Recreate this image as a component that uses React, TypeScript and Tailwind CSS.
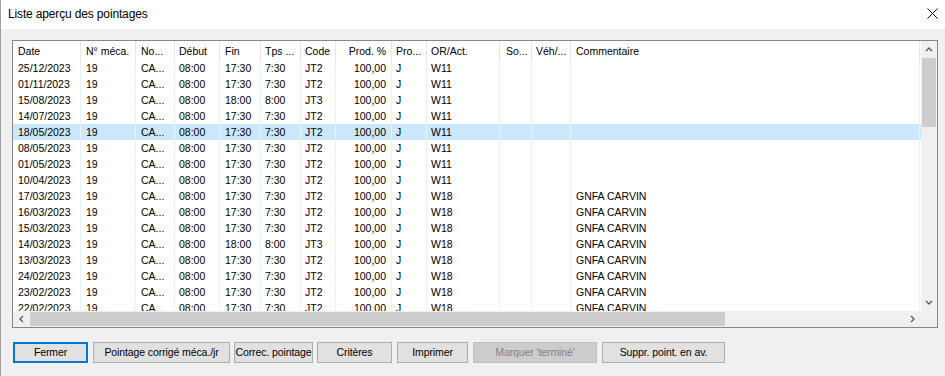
import React from "react";

const cols = [
  { w: 68, label: "Date", right: false, pl: 5 },
  { w: 55, label: "N° méca.", right: false, pl: 5 },
  { w: 39, label: "No...", right: false, pl: 5 },
  { w: 45, label: "Début", right: false, pl: 4 },
  { w: 41, label: "Fin", right: false, pl: 5 },
  { w: 40, label: "Tps ...", right: false, pl: 4 },
  { w: 35, label: "Code", right: false, pl: 4 },
  { w: 56, label: "Prod. %", right: true, pl: 0 },
  { w: 35, label: "Pro...", right: false, pl: 4 },
  { w: 73, label: "OR/Act.", right: false, pl: 4 },
  { w: 32, label: "So...", right: false, pl: 6 },
  { w: 39, label: "Véh/...", right: false, pl: 4 },
  { w: 349, label: "Commentaire", right: false, pl: 5 },
];

type Row = string[];
const mk = (d: string, fin: string, tps: string, code: string, or: string, com: string): Row => [
  d, "19", "CA...", "08:00", fin, tps, code, "100,00", "J", or, "", "", com,
];

const rows: Row[] = [
  mk("25/12/2023", "17:30", "7:30", "JT2", "W11", ""),
  mk("01/11/2023", "17:30", "7:30", "JT2", "W11", ""),
  mk("15/08/2023", "18:00", "8:00", "JT3", "W11", ""),
  mk("14/07/2023", "17:30", "7:30", "JT2", "W11", ""),
  mk("18/05/2023", "17:30", "7:30", "JT2", "W11", ""),
  mk("08/05/2023", "17:30", "7:30", "JT2", "W11", ""),
  mk("01/05/2023", "17:30", "7:30", "JT2", "W11", ""),
  mk("10/04/2023", "17:30", "7:30", "JT2", "W11", ""),
  mk("17/03/2023", "17:30", "7:30", "JT2", "W18", "GNFA CARVIN"),
  mk("16/03/2023", "17:30", "7:30", "JT2", "W18", "GNFA CARVIN"),
  mk("15/03/2023", "17:30", "7:30", "JT2", "W18", "GNFA CARVIN"),
  mk("14/03/2023", "18:00", "8:00", "JT3", "W18", "GNFA CARVIN"),
  mk("13/03/2023", "17:30", "7:30", "JT2", "W18", "GNFA CARVIN"),
  mk("24/02/2023", "17:30", "7:30", "JT2", "W18", "GNFA CARVIN"),
  mk("23/02/2023", "17:30", "7:30", "JT2", "W18", "GNFA CARVIN"),
  mk("22/02/2023", "17:30", "7:30", "JT2", "W18", "GNFA CARVIN"),
];

const Chevron = ({ dir }: { dir: "up" | "down" | "left" | "right" }) => {
  const pts: Record<string, string> = {
    up: "1,5 4,2 7,5",
    down: "1,2 4,5 7,2",
    left: "5,1 2,4 5,7",
    right: "2,1 5,4 2,7",
  };
  return (
    <svg width="8" height="8" viewBox="0 0 8 8">
      <polyline points={pts[dir]} fill="none" stroke="#606060" strokeWidth="1.4" />
    </svg>
  );
};

const Btn = ({ label, w, ml, focused, disabled }: { label: string; w: number; ml: number; focused?: boolean; disabled?: boolean }) => (
  <div
    style={{ width: w, marginLeft: ml }}
    className={
      "h-[21px] flex items-center justify-center text-[10.5px] whitespace-nowrap overflow-hidden tracking-[-0.1px] " +
      (focused
        ? "border-2 border-[#0078d7] bg-[#e1e1e1] text-black"
        : disabled
        ? "border border-[#bfbfbf] bg-[#cccccc] text-[#838383]"
        : "border border-[#adadad] bg-[#e1e1e1] text-black")
    }
  >
    {label}
  </div>
);

export default function App() {
  return (
    <div className="w-[945px] h-[376px] bg-[#f0f0f0] border-l border-[#a0a0a0] flex flex-col font-['Liberation_Sans',Arial,sans-serif] text-black overflow-hidden">
      <div className="h-[29px] bg-white flex items-center justify-between pl-[7px] pr-[7px] shrink-0">
        <span className="text-[12px] leading-none pb-[2px] tracking-[-0.15px]">Liste aperçu des pointages</span>
        <svg width="11" height="11" viewBox="0 0 11 11" className="mb-[2px]">
          <path d="M0.5 0.5 L10.5 10.5 M10.5 0.5 L0.5 10.5" stroke="#111" strokeWidth="1" />
        </svg>
      </div>
      <div className="pt-[11px] pl-[11px]">
        <div className="w-[926px] h-[288px] border border-[#828790] bg-white flex flex-col">
          <div className="flex h-[270px]">
            <div className="w-[908px] overflow-hidden text-[10.5px]">
              <div className="flex h-[19px]">
                {cols.map((c, i) => (
                  <div
                    key={i}
                    style={{ width: c.w, paddingLeft: c.pl }}
                    className={
                      "shrink-0 border-r border-[#e5e5e5] flex items-center pt-[3px] whitespace-nowrap overflow-hidden " +
                      (c.right ? "justify-end pr-[5px]" : "")
                    }
                  >
                    {c.label}
                  </div>
                ))}
              </div>
              {rows.map((r, ri) => (
                <div key={ri} className={"flex h-[16px] " + (ri === 4 ? "bg-[#cce8ff]" : "")}>
                  {cols.map((c, i) => (
                    <div
                      key={i}
                      style={{ width: c.w, paddingLeft: c.pl }}
                      className={
                        "shrink-0 border-r border-[#edf2f8] flex items-center pt-[1px] whitespace-nowrap overflow-hidden " +
                        (c.right ? "justify-end pr-[5px]" : "")
                      }
                    >
                      {r[i]}
                    </div>
                  ))}
                </div>
              ))}
            </div>
            <div className="w-[16px] bg-[#f0f0f0] flex flex-col">
              <div className="h-[17px] flex items-center justify-center">
                <Chevron dir="up" />
              </div>
              <div className="h-[69px] mx-[1px] bg-[#cdcdcd]" />
              <div className="flex-1" />
              <div className="h-[17px] flex items-center justify-center">
                <Chevron dir="down" />
              </div>
            </div>
          </div>
          <div className="h-[16px] flex bg-[#f0f0f0]">
            <div className="w-[908px] flex items-center">
              <div className="w-[17px] h-full flex items-center justify-center">
                <Chevron dir="left" />
              </div>
              <div className="w-[695px] h-[14px] bg-[#cdcdcd]" />
              <div className="flex-1" />
              <div className="w-[17px] h-full flex items-center justify-center">
                <Chevron dir="right" />
              </div>
            </div>
            <div className="w-[16px]" />
          </div>
        </div>
      </div>
      <div className="flex mt-[14px]">
        <Btn label="Fermer" w={75} ml={12} focused />
        <Btn label="Pointage corrigé méca./jr" w={137} ml={5} />
        <Btn label="Correc. pointage" w={79} ml={4} />
        <Btn label="Critères" w={75} ml={4} />
        <Btn label="Imprimer" w={71} ml={5} />
        <Btn label="Marquer 'terminé'" w={124} ml={5} disabled />
        <Btn label="Suppr. point. en av." w={123} ml={5} />
      </div>
    </div>
  );
}
